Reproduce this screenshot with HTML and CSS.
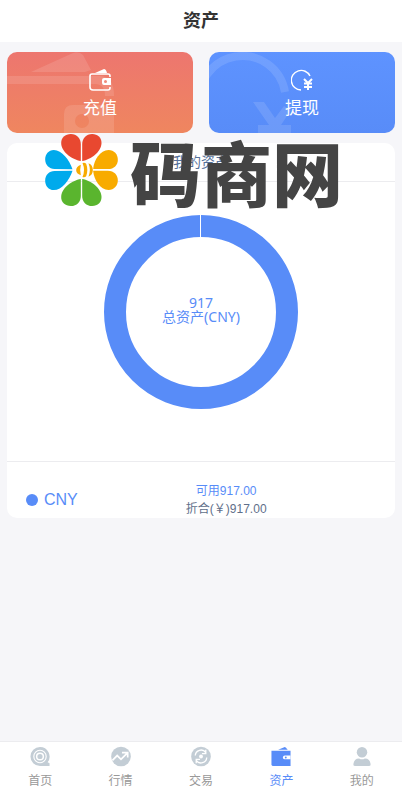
FILE: index.html
```html
<!DOCTYPE html>
<html lang="zh-CN">
<head>
    <meta charset="UTF-8">
    <meta name="viewport" content="width=device-width, initial-scale=1">
    <title>资产</title>
    <link rel="stylesheet" href="styles.css">
</head>
<body>
<div class="page">
    <header class="header"><h1>资产</h1></header>
    <main class="main">
        <div class="actions">
            <button type="button" class="action recharge">
                <svg class="action-bg" viewBox="0 0 186 81" preserveAspectRatio="xMinYMin slice" aria-hidden="true">
                    <g fill="#fff" fill-opacity=".12">
                        <path d="M24 20L66 1Q72-1 76 3L84 18L78 20Z"/>
                        <path d="M0 24H94Q107 25 107 44H98Q98 32 88 32H0Z"/>
                        <path fill-rule="evenodd" d="M66 53H107V81H57V62Q57 53 66 53ZM75 62A7 7 0 1 0 75 76A7 7 0 1 0 75 62Z"/>
                    </g>
                </svg>
                <svg class="action-icon" viewBox="0 0 22 22" aria-hidden="true">
                    <path d="M6 4L15 0Q17 0 18 4Z" fill="#fff"/>
                    <path d="M21 8V7Q21 5 19 5H3Q1 5 1 7V18Q1 21 4 21H19Q21 21 21 19V18" fill="none" stroke="#fff" stroke-width="1.6"/>
                    <path fill-rule="evenodd" d="M15 9H22V16H15Q13 16 13 14V11Q13 9 15 9ZM16.5 11A1.5 1.5 0 1 0 16.5 14A1.5 1.5 0 1 0 16.5 11Z" fill="#fff"/>
                </svg>
                <span>充值</span>
            </button>
            <button type="button" class="action withdraw">
                <svg class="action-bg" viewBox="0 0 186 81" preserveAspectRatio="xMinYMin slice" aria-hidden="true">
                    <path d="M-9 54A43 43 0 0 1 76 40" fill="none" stroke="#fff" stroke-opacity=".12" stroke-width="8"/>
                    <path d="M44 50H55L66 66L75 54L82 58L72 73H82V81H49V73H60Z" fill="#fff" fill-opacity=".12"/>
                </svg>
                <svg class="action-icon" viewBox="0 0 22 22" aria-hidden="true">
                    <path d="M10 21A9.8 9.8 0 1 1 19 7" fill="none" stroke="#fff" stroke-width="1.4"/>
                    <path d="M13 10L17 14L21 10M17 14V21M13 14.5H21M13 18H21" fill="none" stroke="#fff" stroke-width="2"/>
                </svg>
                <span>提现</span>
            </button>
        </div>
        <section class="panel">
            <h2 class="panel-title">我的资产</h2>
            <div class="chart">
                <svg class="ring" viewBox="0 0 194 194" aria-hidden="true">
                    <circle cx="97" cy="97" r="86" fill="none" stroke="#588cf8" stroke-width="22"/>
                    <path d="M96.5 0V24" stroke="#fff"/>
                </svg>
                <div class="total">
                    <span>917</span>
                    <span>总资产(CNY)</span>
                </div>
            </div>
            <div class="coin">
                <div class="coin-name"><i class="dot"></i>CNY</div>
                <div class="coin-num">
                    <span class="usable">可用917.00</span>
                    <span>折合(￥)917.00</span>
                </div>
            </div>
        </section>
    </main>
    <nav class="tabbar">
        <a href="#">
            <svg viewBox="0 0 22 22" aria-hidden="true">
                <path d="M11 1A10 10 0 1 0 11 21H21V18L19 17A10 10 0 0 0 11 1Z" fill="#c3cdd5"/>
                <circle cx="11" cy="11" r="6.5" fill="none" stroke="#fff" stroke-width="1.2"/>
                <circle cx="11" cy="11" r="3.5" fill="none" stroke="#fff" stroke-width="1.6"/>
            </svg>
            <span>首页</span>
        </a>
        <a href="#">
            <svg viewBox="0 0 22 22" aria-hidden="true">
                <circle cx="11" cy="11" r="10.3" fill="#c3cdd5"/>
                <path d="M2 15L7 10L11 14L17 8M12 7H18V12" fill="none" stroke="#fff" stroke-width="1.8"/>
            </svg>
            <span>行情</span>
        </a>
        <a href="#">
            <svg viewBox="0 0 22 22" aria-hidden="true">
                <circle cx="11" cy="11" r="10.3" fill="#c3cdd5"/>
                <path d="M5 10A6 6 0 0 1 16 7M17 12A6 6 0 0 1 6 15M16 4V8H12M6 18V14H10" fill="none" stroke="#fff" stroke-width="1.4"/>
                <circle cx="11" cy="11" r="2" fill="#fff"/>
            </svg>
            <span>交易</span>
        </a>
        <a href="#" class="current">
            <svg viewBox="0 0 22 22" aria-hidden="true">
                <path d="M8 4L15 1Q16 1 18 4Z" fill="#588cf8"/>
                <path d="M1 5H21V21H3Q1 21 1 19Z" fill="#588cf8"/>
                <path d="M15 10H21V14H15Q13 14 13 12Q13 10 15 10Z" fill="#fff"/>
                <circle cx="16" cy="12" r="1" fill="#588cf8"/>
            </svg>
            <span>资产</span>
        </a>
        <a href="#">
            <svg viewBox="0 0 22 22" aria-hidden="true">
                <circle cx="11" cy="6.5" r="5.5" fill="#c3cdd5"/>
                <path d="M2 20Q2 13 8 13Q11 15 14 13Q20 13 20 20Q20 21 18 21H4Q2 21 2 20Z" fill="#c3cdd5"/>
            </svg>
            <span>我的</span>
        </a>
    </nav>
    <div class="brand">
        <svg viewBox="30 27 218 216" aria-hidden="true">
            <g fill="#e84830">
                <path d="M137 108C110 104 78 80 78 54C78 38 90 27 107 27C125 27 137 40 137 58Z"/>
                <path d="M141 108C167 104 199 80 199 54C199 38 188 27 171 27C153 27 141 40 141 58Z"/>
            </g>
            <g fill="#f8ab00">
                <path d="M174 132C176 105 195 75 220 75C237 75 248 88 248 104C248 120 237 132 218 132Z"/>
                <path d="M174 137C176 164 195 195 220 195C237 195 248 182 248 166C248 150 237 137 218 137Z"/>
                <path d="M137 119Q123 124 123 135Q123 146 137 151Q133 135 137 119Z"/>
                <path d="M142 114Q149 112 153 116Q160 135 153 154Q149 158 142 156Q151 135 142 114Z"/>
                <path d="M160 115Q173 120 173 135Q173 150 160 155Q168 135 160 115Z"/>
            </g>
            <g fill="#00aaec">
                <path d="M112 133C103 105 80 75 56 75C40 75 30 88 30 103C30 120 42 132 58 132Z"/>
                <path d="M112 137C103 165 80 195 56 195C40 195 30 182 30 167C30 150 42 138 58 138Z"/>
            </g>
            <g fill="#5ab52e">
                <path d="M137 162C110 166 78 190 78 216C78 232 90 243 107 243C125 243 137 230 137 212Z"/>
                <path d="M141 162C167 166 199 190 199 216C199 232 188 243 171 243C153 243 141 230 141 212Z"/>
            </g>
        </svg>
        <span>码商网</span>
    </div>
</div>
</body>
</html>
```
FILE: styles.css
```css
* {
    box-sizing: border-box;
    margin: 0;
    padding: 0;
}

body {
    background: #f6f6f9;
    font-family: "Liberation Sans", "Noto Sans CJK SC", sans-serif;
    color: #56719a;
}

.page {
    display: flex;
    flex-direction: column;
    min-height: 100vh;
    position: relative;
}

.header {
    height: 42px;
    background: #fff;
    text-align: center;
}

.header h1 {
    font-size: 18px;
    line-height: 42px;
    color: #333;
}

.main {
    flex: 1;
    padding: 10px 7px;
}

.actions {
    display: grid;
    grid-template-columns: 1fr 1fr;
    gap: 16px;
    margin-bottom: 10px;
}

.action {
    position: relative;
    display: flex;
    flex-direction: column;
    align-items: center;
    height: 81px;
    padding-top: 17px;
    border: 0;
    border-radius: 10px;
    overflow: hidden;
    color: #fff;
    font-family: inherit;
    font-size: 17px;
    line-height: 24px;
    cursor: pointer;
}

.recharge {
    background: linear-gradient(#ed766f, #ef865f);
}

.withdraw {
    background: linear-gradient(#5e93ff, #588cf8);
}

.action-bg {
    position: absolute;
    left: 0;
    top: 0;
    width: 100%;
    height: 100%;
}

.action-icon {
    width: 22px;
    height: 22px;
    margin-bottom: 6px;
}

.panel {
    background: #fff;
    border-radius: 10px;
    overflow: hidden;
}

.panel-title {
    height: 39px;
    border-bottom: 1px solid #ececef;
    font-size: 14px;
    font-weight: normal;
    line-height: 38px;
    text-align: center;
}

.chart {
    display: grid;
    place-items: center;
    height: 280px;
    padding-bottom: 20px;
    border-bottom: 1px solid #ececef;
}

.ring,
.total {
    grid-area: 1 / 1;
}

.ring {
    width: 194px;
    height: 194px;
}

.total {
    display: flex;
    flex-direction: column;
    align-items: center;
    padding-bottom: 4px;
    color: #588cf8;
    font-family: "Noto Sans", "Noto Sans CJK SC", sans-serif;
    font-size: 14px;
    line-height: 14px;
}

.coin {
    display: grid;
    grid-template-columns: 33% 47%;
    padding-top: 20px;
}

.coin-name {
    display: flex;
    align-items: center;
    gap: 6px;
    padding-left: 19px;
    color: #588cf8;
    font-size: 16px;
}

.dot {
    width: 12px;
    height: 12px;
    border-radius: 50%;
    background: #588cf8;
}

.coin-num {
    display: flex;
    flex-direction: column;
    align-items: center;
    color: #5f6f8a;
    font-size: 12px;
    line-height: 18px;
}

.usable {
    color: #588cf8;
}

.tabbar {
    display: flex;
    height: 48px;
    border-top: 1px solid #ececef;
    background: #fff;
}

.tabbar a {
    display: flex;
    flex: 1;
    flex-direction: column;
    align-items: center;
    gap: 6px;
    padding-top: 4px;
    color: #999;
    font-size: 12px;
    line-height: 16px;
    text-decoration: none;
}

.tabbar svg {
    width: 22px;
    height: 22px;
}

.tabbar .current {
    color: #588cf8;
}

/* floats over the cards */
.brand {
    position: absolute;
    left: 45px;
    top: 134px;
    display: flex;
    align-items: flex-start;
    gap: 12px;
    color: #444;
    font-family: "Noto Sans CJK SC", sans-serif;
    font-size: 71px;
    font-weight: 900;
    line-height: 72px;
    white-space: nowrap;
    pointer-events: none;
}

.brand svg {
    width: 73px;
    height: 72px;
}
```
